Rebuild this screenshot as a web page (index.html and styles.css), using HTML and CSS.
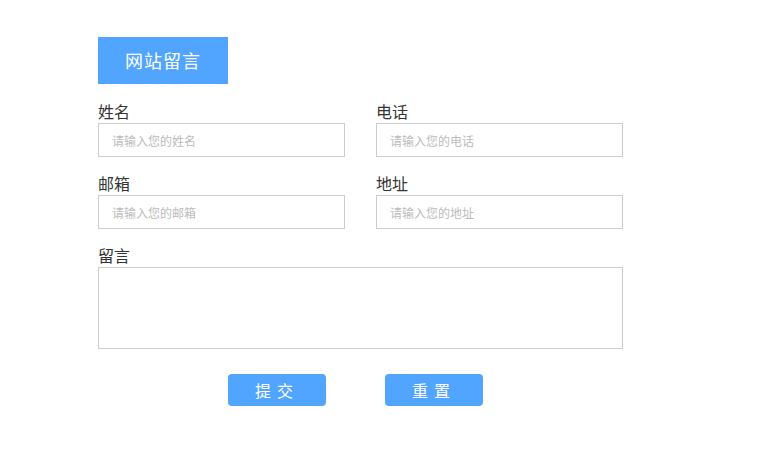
FILE: index.html
```html
<!DOCTYPE html>
<html lang="zh">
<head>
<meta charset="utf-8">
<link rel="stylesheet" href="styles.css">
</head>
<body>
<div class="page">
  <div class="title">网站留言</div>
  <form class="form">
    <div class="row">
      <div class="field">
        <label class="label">姓名</label>
        <input class="input" type="text" placeholder="请输入您的姓名">
      </div>
      <div class="field">
        <label class="label">电话</label>
        <input class="input" type="text" placeholder="请输入您的电话">
      </div>
    </div>
    <div class="row">
      <div class="field">
        <label class="label">邮箱</label>
        <input class="input" type="text" placeholder="请输入您的邮箱">
      </div>
      <div class="field">
        <label class="label">地址</label>
        <input class="input" type="text" placeholder="请输入您的地址">
      </div>
    </div>
    <div class="field wide">
      <label class="label">留言</label>
      <textarea class="textarea"></textarea>
    </div>
    <div class="actions">
      <button type="button" class="btn">提交</button>
      <button type="button" class="btn">重置</button>
    </div>
  </form>
</div>
</body>
</html>
```
FILE: styles.css
```css
* { box-sizing: border-box; }
html, body { margin: 0; padding: 0; background: #fff; }
body {
  font-family: "Noto Sans CJK SC", "Noto Sans", sans-serif;
  color: #333;
}
.page {
  padding: 37px 0 0 98px;
}
.title {
  width: 130px;
  height: 47px;
  background: #51a5fe;
  color: #fff;
  font-size: 18px;
  line-height: 47px;
  text-align: center;
  letter-spacing: 1px;
}
.form {
  margin-top: 17px;
  width: 525px;
  display: flex;
  flex-direction: column;
  gap: 16px;
}
.row {
  display: flex;
  gap: 31px;
}
.field {
  display: flex;
  flex-direction: column;
  width: 247px;
}
.field.wide { width: 525px; }
.label {
  font-size: 16px;
  line-height: 20px;
  height: 22px;
  color: #333;
}
.input {
  width: 100%;
  height: 34px;
  border: 1px solid #cccccc;
  padding: 0 13px;
  font-family: inherit;
  font-size: 12px;
  color: #333;
  outline: none;
  margin: 0;
}
.input::placeholder { color: #bbbbbb; }
.textarea {
  width: 100%;
  height: 82px;
  border: 1px solid #cccccc;
  margin: 0;
  resize: none;
  outline: none;
  font-family: inherit;
  display: block;
}
.actions {
  display: flex;
  gap: 59px;
  padding-left: 130px;
  margin-top: 9px;
}
.btn {
  width: 98px;
  height: 32px;
  border: none;
  border-radius: 4px;
  background: #51a5fe;
  color: #fff;
  font-family: inherit;
  font-size: 16px;
  letter-spacing: 6px;
  padding: 0;
  cursor: pointer;
}
```
